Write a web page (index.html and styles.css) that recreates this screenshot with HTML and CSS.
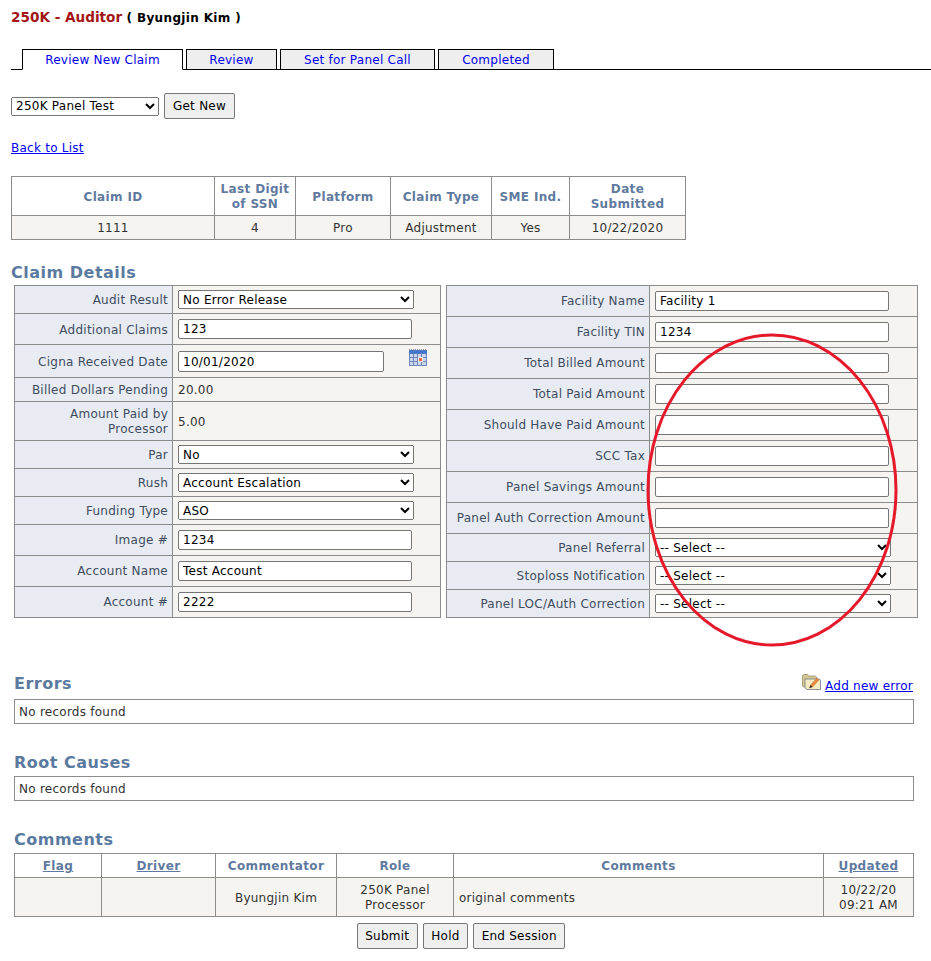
FILE: index.html
```html
<!DOCTYPE html>
<html lang="en">
<head>
    <meta charset="UTF-8">
    <title>250K - Auditor</title>
    <link rel="stylesheet" href="styles.css">
</head>
<body>
    <div class="page">
        <div class="title"><span class="role">250K - Auditor</span> <span class="user">( Byungjin Kim )</span></div>

        <ul class="tabs">
            <li class="tab active tab-new"><a href="#">Review New Claim</a></li>
            <li class="tab tab-review"><a href="#">Review</a></li>
            <li class="tab tab-panel"><a href="#">Set for Panel Call</a></li>
            <li class="tab tab-done"><a href="#">Completed</a></li>
        </ul>

        <div class="queue">
            <select class="queue-select"><option>250K Panel Test</option></select>
            <button type="button" class="btn">Get New</button>
        </div>

        <p class="back"><a href="#">Back to List</a></p>

        <table class="grid text-grid summary">
            <colgroup>
                <col class="s1"><col class="s2"><col class="s3"><col class="s4"><col class="s5"><col class="s6">
            </colgroup>
            <tr>
                <th>Claim ID</th>
                <th>Last Digit<br>of SSN</th>
                <th>Platform</th>
                <th>Claim Type</th>
                <th>SME Ind.</th>
                <th>Date<br>Submitted</th>
            </tr>
            <tr class="shaded">
                <td>1111</td>
                <td>4</td>
                <td>Pro</td>
                <td>Adjustment</td>
                <td>Yes</td>
                <td>10/22/2020</td>
            </tr>
        </table>

        <h2 class="section details-title">Claim Details</h2>
        <div class="details">
            <table class="grid form-table left-form">
                <colgroup><col class="lbl-l"><col></colgroup>
                <tr><td class="lbl">Audit Result</td><td><select class="sel-l"><option>No Error Release</option></select></td></tr>
                <tr><td class="lbl">Additional Claims</td><td><input class="inp-l" type="text" value="123"></td></tr>
                <tr><td class="lbl">Cigna Received Date</td><td>
                    <div class="date-row">
                        <input class="inp-date" type="text" value="10/01/2020">
                        <svg class="cal" width="18" height="17" viewBox="0 0 18 17">
                            <rect x="0" y="1" width="18" height="16" fill="#6f86b8"/>
                            <path d="M0 .5h18" stroke="#8a8f99" stroke-dasharray="1 1"/>
                            <rect x="0" y="1.5" width="18" height="3" fill="#3f74d0"/>
                            <path d="M1 5h3v3H1zM5 5h3v3H5zM9 5h3v3H9zM13 5h4v3h-4zM1 9h3v3H1zM5 9h3v3H5zM13 9h4v3h-4zM1 13h3v3H1zM5 13h3v3H5zM9 13h3v3H9zM13 13h4v3h-4z" fill="#c9d5ee"/>
                            <rect x="9" y="8" width="5" height="5" fill="#f3f0e8"/>
                            <rect x="10" y="9" width="3" height="3" fill="#ee6a4a"/>
                        </svg>
                    </div>
                </td></tr>
                <tr><td class="lbl">Billed Dollars Pending</td><td class="val">20.00</td></tr>
                <tr><td class="lbl">Amount Paid by<br>Processor</td><td class="val">5.00</td></tr>
                <tr><td class="lbl">Par</td><td><select class="sel-l"><option>No</option></select></td></tr>
                <tr><td class="lbl">Rush</td><td><select class="sel-l"><option>Account Escalation</option></select></td></tr>
                <tr><td class="lbl">Funding Type</td><td><select class="sel-l"><option>ASO</option></select></td></tr>
                <tr class="input-row"><td class="lbl">Image #</td><td><input class="inp-l" type="text" value="1234"></td></tr>
                <tr class="input-row"><td class="lbl">Account Name</td><td><input class="inp-l" type="text" value="Test Account"></td></tr>
                <tr class="input-row"><td class="lbl">Account #</td><td><input class="inp-l" type="text" value="2222"></td></tr>
            </table>
            <table class="grid form-table right-form">
                <colgroup><col class="lbl-r"><col></colgroup>
                <tr class="input-row"><td class="lbl">Facility Name</td><td><input class="inp-r" type="text" value="Facility 1"></td></tr>
                <tr class="input-row"><td class="lbl">Facility TIN</td><td><input class="inp-r" type="text" value="1234"></td></tr>
                <tr class="input-row"><td class="lbl">Total Billed Amount</td><td><input class="inp-r" type="text"></td></tr>
                <tr class="input-row"><td class="lbl">Total Paid Amount</td><td><input class="inp-r" type="text"></td></tr>
                <tr class="input-row"><td class="lbl">Should Have Paid Amount</td><td><input class="inp-r" type="text"></td></tr>
                <tr class="input-row"><td class="lbl">SCC Tax</td><td><input class="inp-r" type="text"></td></tr>
                <tr class="input-row"><td class="lbl">Panel Savings Amount</td><td><input class="inp-r" type="text"></td></tr>
                <tr class="input-row"><td class="lbl">Panel Auth Correction Amount</td><td><input class="inp-r" type="text"></td></tr>
                <tr><td class="lbl">Panel Referral</td><td><select class="sel-r"><option>-- Select --</option></select></td></tr>
                <tr><td class="lbl">Stoploss Notification</td><td><select class="sel-r"><option>-- Select --</option></select></td></tr>
                <tr><td class="lbl">Panel LOC/Auth Correction</td><td><select class="sel-r"><option>-- Select --</option></select></td></tr>
            </table>
        </div>

        <div class="section-head errors-head">
            <h2 class="section">Errors</h2>
            <div class="add-error">
                <svg class="add-icon" width="19" height="16" viewBox="0 0 19 16">
                    <path d="M.5 1.500 1.500.5h4l1 1.500h7l1 1V12l-1 1h-12l-1-1z" fill="#d2c58e" stroke="#9a9170" stroke-width=".8"/>
                    <path d="M3 5h14.500l1 1v9.500H5l-2-1.500z" fill="#f4ecc0" stroke="#7f8794" stroke-width=".9"/>
                    <path d="M7.500 14l1-3 6.500-7 2 2-6.500 7z" fill="#e8893f" stroke="#b4602a" stroke-width=".4"/>
                    <path d="M7.500 14l1-3 2 2z" fill="#2f2f3a"/>
                </svg>
                <a href="#">Add new error</a>
            </div>
        </div>
        <table class="grid text-grid wide"><tr><td class="empty">No records found</td></tr></table>

        <h2 class="section roots-title">Root Causes</h2>
        <table class="grid text-grid wide"><tr><td class="empty">No records found</td></tr></table>

        <h2 class="section comments-title">Comments</h2>
        <table class="grid text-grid wide comments">
            <colgroup>
                <col class="c1"><col class="c2"><col class="c3"><col class="c4"><col class="c5"><col class="c6">
            </colgroup>
            <tr>
                <th><a href="#">Flag</a></th>
                <th><a href="#">Driver</a></th>
                <th>Commentator</th>
                <th>Role</th>
                <th>Comments</th>
                <th><a href="#">Updated</a></th>
            </tr>
            <tr class="shaded">
                <td></td>
                <td></td>
                <td>Byungjin Kim</td>
                <td>250K Panel<br>Processor</td>
                <td class="text-left">original comments</td>
                <td>10/22/20<br>09:21 AM</td>
            </tr>
        </table>

        <div class="actions">
            <button type="button" class="btn">Submit</button>
            <button type="button" class="btn">Hold</button>
            <button type="button" class="btn">End Session</button>
        </div>
    </div>

    <!-- hand drawn review mark on top of the form -->
    <svg class="mark" width="260" height="320" viewBox="0 0 260 320">
        <ellipse cx="130" cy="160" rx="124" ry="155" fill="none" stroke="#e6192b" stroke-width="3"/>
    </svg>
</body>
</html>
```

FILE: styles.css
```css
body {
    margin: 0;
    background: #fff;
    font-family: "DejaVu Sans", Verdana, sans-serif;
    font-size: 12px;
    line-height: 15px;
    letter-spacing: .25px;
    color: #333;
}
.page {
    position: relative;
    height: 961px;
    overflow: hidden;
}
a {
    color: #00e;
}

.title {
    padding: 10px 0 0 11px;
    height: 19px;
    font-weight: bold;
}
.role {
    font-size: 13.6px;
    letter-spacing: 0;
    color: #a31515;
}
.user {
    color: #000;
    letter-spacing: .35px;
}

.tabs {
    display: flex;
    list-style: none;
    margin: 20px 0 0 11px;
    padding: 0;
    height: 20px;
    border-bottom: 1px solid #000;
}
.tabs::before {
    content: "";
    width: 11px;
}
.tab {
    box-sizing: border-box;
    height: 21px;
    margin-right: 3px;
    background: #eee;
    border: 1px solid #000;
    text-align: center;
    line-height: 20px;
}
.tab a {
    color: #00e;
    text-decoration: none;
}
.tab.active {
    background: #fff;
    border-bottom-color: #fff;
}
.tab-new { width: 161px; }
.tab-review { width: 91px; }
.tab-panel { width: 155px; }
.tab-done { width: 116px; }

.queue {
    display: flex;
    align-items: center;
    gap: 5px;
    margin: 23px 0 0 11px;
}
select, input, .btn {
    font-family: inherit;
    font-size: 12px;
    letter-spacing: .25px;
    box-sizing: border-box;
}
.queue-select {
    width: 148px;
    height: 19px;
}
.btn {
    height: 26px;
    padding: 0 7.5px;
    background: #efefef;
    border: 1px solid #767676;
    border-radius: 2px;
    color: #000;
}
.queue .btn {
    width: 71px;
}
.back {
    margin: 22px 0 0 11px;
}

.grid {
    border-collapse: collapse;
    table-layout: fixed;
}
.grid th, .grid td {
    border: 1px solid #8c8c8c;
    padding: 4px 5px;
    text-align: center;
}
/* DejaVu sits a pixel higher than the cell centre, nudge text cells down */
.text-grid th, .text-grid td {
    padding: 5px 5px 3px;
}
.grid th {
    color: #5f7a9e;
    font-weight: bold;
    letter-spacing: .35px;
}
.grid th a {
    color: #5f7a9e;
}
.shaded td {
    background: #f5f4f0;
}

.summary {
    width: 675px;
    margin: 20px 0 0 11px;
}
.s1 { width: 203px; }
.s2 { width: 81px; }
.s3 { width: 95px; }
.s4 { width: 101px; }
.s5 { width: 78px; }
.s6 { width: 116px; }

.section {
    margin: 0;
    font-size: 16px;
    line-height: 20px;
    font-weight: bold;
    letter-spacing: .5px;
    color: #5b7a9f;
}
.details-title {
    margin: 23px 0 0 11px;
}

.details {
    display: flex;
    gap: 5px;
    margin: 2px 0 0 14px;
}
.form-table td {
    background: #f5f4f0;
    padding: 4px 5px;
    text-align: left;
}
.form-table td.lbl {
    background: #e8ecf2;
    color: #3f4b5f;
    text-align: right;
    padding: 5px 4px 3px 5px;
}
.form-table .input-row td.lbl {
    padding: 4px 4px 4px 5px;
}
.form-table td.val {
    padding: 5px 5px 3px;
}
.left-form { width: 427px; }
.right-form { width: 472px; }
.lbl-l { width: 158px; }
.lbl-r { width: 203px; }

.form-table input, .form-table select {
    display: block;
    color: #000;
}
.form-table input {
    height: 21px;
    padding: 1px 4px;
    margin: 0;
    border: 1px solid #767676;
    border-radius: 2px;
}
.inp-l, .inp-r {
    width: 234px;
    height: 20px !important;
    margin: 1px 0 !important;
}
.sel-l, .sel-r {
    width: 236px;
    height: 19px;
}
.date-row {
    display: flex;
    align-items: flex-start;
    height: 24px;
}
.inp-date {
    width: 206px;
    margin-top: 2px !important;
}
.cal {
    margin-left: 25px;
}

.section-head {
    display: flex;
    justify-content: space-between;
    align-items: flex-end;
    width: 899px;
    margin-left: 14px;
}
.errors-head {
    margin-top: 56px;
}
.add-error {
    display: flex;
    align-items: flex-end;
    gap: 4px;
}
.add-icon {
    margin-bottom: 4px;
}
.wide {
    width: 900px;
    margin: 5px 0 0 14px;
}
.wide td.empty {
    text-align: left;
    padding: 5px 4px 3px;
    height: 15px;
}
.roots-title, .comments-title {
    margin: 29px 0 0 14px;
}
.roots-title + .wide, .comments {
    margin-top: 3px;
}
.c1 { width: 87px; }
.c2 { width: 114px; }
.c3 { width: 121px; }
.c4 { width: 117px; }
.c5 { width: 370px; }
.c6 { width: 90px; }
.comments td.text-left {
    text-align: left;
}

.actions {
    display: flex;
    justify-content: center;
    gap: 5px;
    margin-top: 6px;
    width: 922px;
}

.mark {
    position: absolute;
    left: 642px;
    top: 330px;
    pointer-events: none;
}
```
